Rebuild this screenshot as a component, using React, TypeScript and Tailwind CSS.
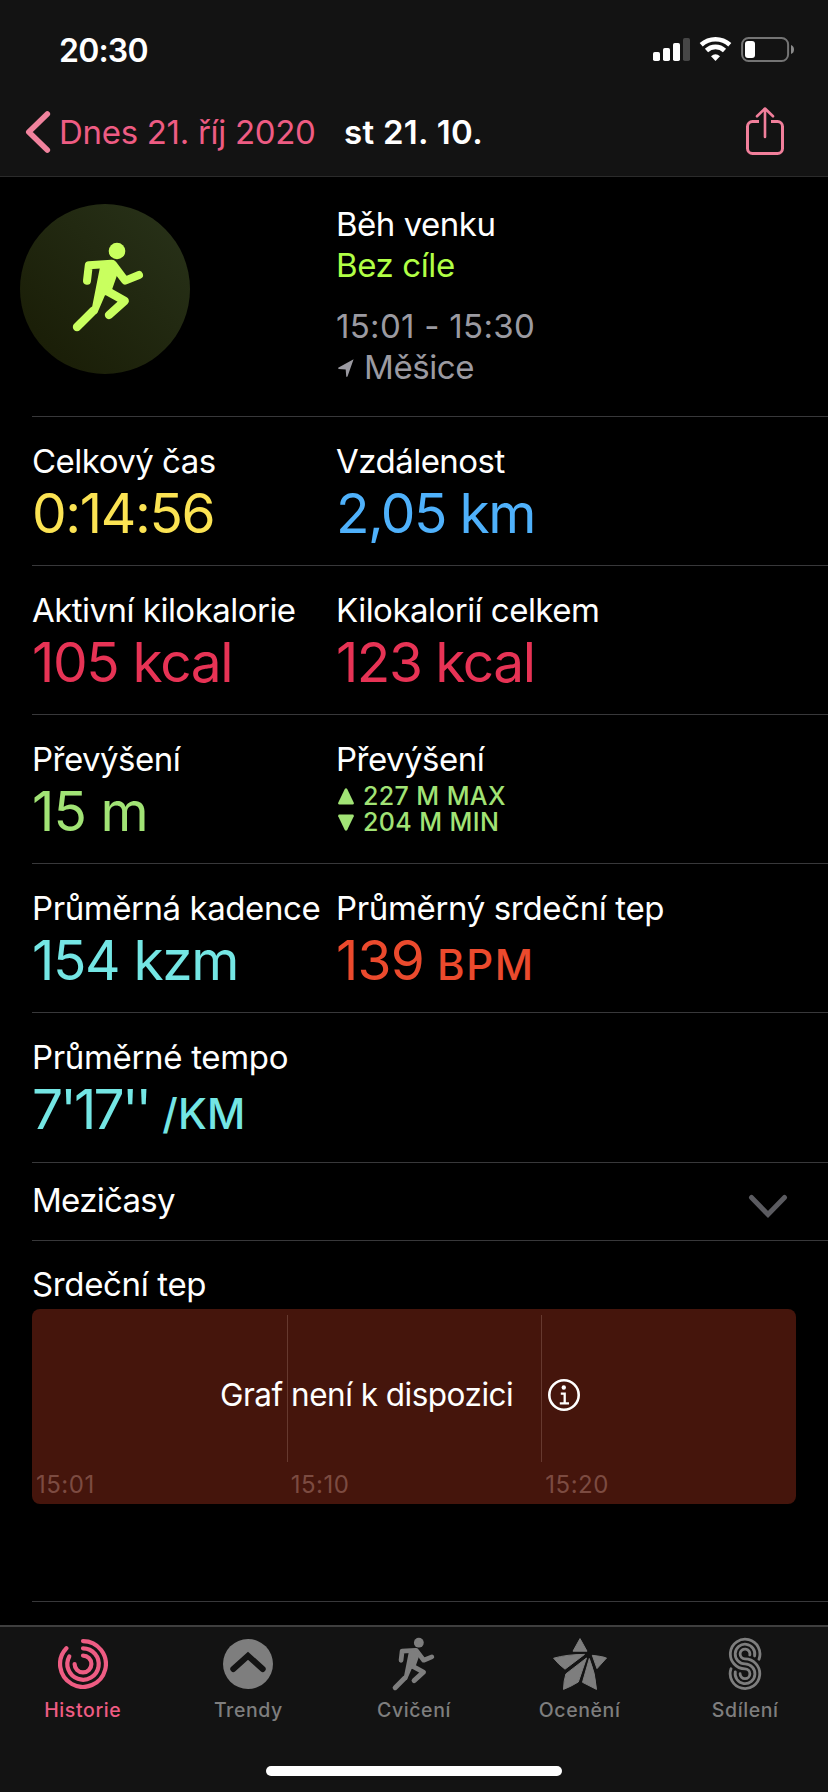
import type { ReactNode } from 'react';
import { clsx } from 'clsx';

interface Metric {
  label: string;
  labelTracking?: string;
  value?: string;
  unit?: string;
  unitTracking?: string;
  color: string;
  tracking?: string;
  range?: { max: string; min: string };
}

const metrics: Metric[][] = [
  [
    { label: 'Celkový čas', value: '0:14:56', color: 'text-[#fbe353]' },
    { label: 'Vzdálenost', value: '2,05 km', color: 'text-[#4fb1fb]', tracking: 'tracking-[-1.6px]' },
  ],
  [
    { label: 'Aktivní kilokalorie', value: '105 kcal', color: 'text-[#e73355]' },
    { label: 'Kilokalorií celkem', value: '123 kcal', color: 'text-[#e73355]', tracking: 'tracking-[-1.5px]' },
  ],
  [
    { label: 'Převýšení', value: '15 m', color: 'text-[#a1e375]', tracking: 'tracking-[-0.9px]' },
    { label: 'Převýšení', color: 'text-[#a1e375]', range: { max: '227 M MAX', min: '204 M MIN' } },
  ],
  [
    { label: 'Průměrná kadence', labelTracking: 'tracking-[-0.43px]', value: '154 kzm', color: 'text-[#74e6e4]' },
    {
      label: 'Průměrný srdeční tep',
      labelTracking: 'tracking-[-0.35px]',
      value: '139',
      unit: 'BPM',
      unitTracking: 'tracking-[1.6px]',
      color: 'text-[#eb4a2d]',
      tracking: 'tracking-[-0.8px]',
    },
  ],
  [
    {
      label: 'Průměrné tempo',
      labelTracking: 'tracking-[-0.33px]',
      value: "7'17''",
      unit: '/KM',
      unitTracking: 'tracking-[0.2px]',
      color: 'text-[#74e6e4]',
      tracking: 'tracking-[-2.8px]',
    },
  ],
];

const chartTicks = ['15:01', '15:10', '15:20'];

// Icons
function Runner({ className }: { className?: string }) {
  return (
    <svg viewBox="50 36 76 94" fill="none" stroke="currentColor" strokeLinecap="round" strokeLinejoin="round" className={className}>
      <circle cx="97" cy="47" r="8.3" fill="currentColor" stroke="none" />
      <path d="M67 76.8 68.8 61.2 91.5 59.8" strokeWidth="8" />
      <path d="M93 60.5 105.2 76.6 119 71" strokeWidth="8" />
      <path d="M82.5 62 94 61 96.5 66 89.5 86 83 90 75.5 107.5 73.8 106Z" fill="currentColor" strokeWidth="4.5" />
      <path d="M73.3 106.7 57 123" strokeWidth="8.4" />
      <path d="M87 87 104.7 96.8 89 111" strokeWidth="8.4" />
    </svg>
  );
}

function RingsIcon() {
  return (
    <svg viewBox="-25 -25 50 50" fill="none" stroke="currentColor" strokeWidth="4.2" strokeLinecap="round" className="w-[50px] h-[50px]">
      <path d="M0 -22.9A22.9 22.9 0 1 1 -16.6 -15.8" />
      <path d="M0 -15.7A15.7 15.7 0 1 1 -13.7 -7.6" />
      <path d="M0 -8.4A8.4 8.4 0 1 1 -8.4 0" />
    </svg>
  );
}

function TrendsIcon() {
  return (
    <svg viewBox="0 0 50 50" className="w-[50px] h-[50px]">
      <circle cx="25" cy="25" r="25" fill="currentColor" />
      <path d="M10.3 30 25 16.7 39.7 30" fill="none" stroke="#131313" strokeWidth="6" strokeLinecap="round" />
    </svg>
  );
}

function AwardsIcon() {
  return (
    <svg viewBox="0 0 54 54" fill="currentColor" stroke="currentColor" strokeWidth="1" strokeLinejoin="round" className="w-[54px] h-[54px]">
      <path d="M27 1.6 34 14.2H20Z" />
      <path d="M.6 21.2Q14 17.4 31.5 17.4L12 32.2Q5 27 .6 21.2Z" />
      <path d="M33.5 21 25.3 45Q18 49.500 10.5 52.4Q10.6 44 12.9 36.9Z" />
      <path d="M36.3 21.5Q42.5 36 43.5 52.4L29.5 45.3Z" />
      <path d="M39.3 18.3Q47 19 53.500 21L44 31.6Z" />
    </svg>
  );
}

function SharingIcon() {
  return (
    <svg viewBox="0 0 34 54" fill="none" stroke="currentColor" strokeWidth="2.8" strokeLinecap="round" className="w-[34px] h-[54px]">
      <path d="M31 22.2A14.8 14.8 0 1 0 17 31.8A4.9 4.9 0 1 1 12.1 36.7" />
      <path d="M26.6 19A9.8 9.8 0 1 0 17 26.8A9.9 9.9 0 1 1 7.3 34.8" />
      <path d="M21.8 18A4.9 4.9 0 1 0 17 21.9A14.8 14.8 0 1 1 3 31.8" />
    </svg>
  );
}

function ShareIcon() {
  return (
    <svg viewBox="0 0 40 50" fill="none" stroke="#f17f9b" strokeWidth="3" strokeLinecap="round" strokeLinejoin="round" className="w-10 h-[50px]">
      <path d="M14 14.5H7.5A5 5 0 0 0 2.5 19.5V41.5A5 5 0 0 0 7.5 46.5H32.5A5 5 0 0 0 37.5 41.5V19.5A5 5 0 0 0 32.5 14.5H26" strokeLinecap="butt" />
      <path d="M20 30V2M12 9.3 20 1.5 28 9.3" strokeWidth="2.6" />
    </svg>
  );
}

function StatusIcons() {
  return (
    <svg viewBox="0 0 144 28" className="w-36 h-7 mt-[6px]">
      <g fill="#fff">
        <rect x="3" y="16" width="7" height="9" rx="1.8" />
        <rect x="13" y="12" width="7" height="13" rx="1.8" />
        <rect x="23" y="7" width="7" height="18" rx="1.8" />
        <rect x="33" y="2" width="7" height="23" rx="1.8" fill="#464646" />
      </g>
      <g fill="none" stroke="#fff" strokeWidth="4.6">
        <path d="M51.2 8.7A21.5 21.5 0 0 1 79.8 8.7" />
        <path d="M56.5 14.5A13 13 0 0 1 74.5 14.5" />
      </g>
      <path d="M65.5 25 61 20.2Q65.5 16.5 70 20.2Z" fill="#fff" />
      <rect x="92.1" y="2" width="46" height="23" rx="6.5" fill="none" stroke="#747474" strokeWidth="2" />
      <rect x="95" y="5" width="10" height="17" rx="3" fill="#fff" />
      <path d="M141 9Q144 10 144 13.5T141 18Z" fill="#8a8a8a" />
    </svg>
  );
}

function InfoIcon() {
  return (
    <svg viewBox="0 0 32 32" fill="none" stroke="#fff" strokeWidth="2.6" className="w-8 h-8">
      <circle cx="16" cy="16" r="14.7" />
      <circle cx="15.8" cy="8.5" r="2.2" fill="#fff" stroke="none" />
      <path d="M12.8 14.6H16.7V24.3M11.8 24.3H21" strokeWidth="2.3" />
    </svg>
  );
}

const tabs: { label: string; icon: ReactNode }[] = [
  { label: 'Historie', icon: <RingsIcon /> },
  { label: 'Trendy', icon: <TrendsIcon /> },
  { label: 'Cvičení', icon: <Runner className="w-[45px] h-[56px]" /> },
  { label: 'Ocenění', icon: <AwardsIcon /> },
  { label: 'Sdílení', icon: <SharingIcon /> },
];

function Header() {
  return (
    <header className="h-[177px] shrink-0 bg-[#131313] border-b border-[#2b2b2b]">
      <div className="flex items-start justify-between h-[88px] pl-[59px] pr-[34px] pt-[30px]">
        <span className="pt-px text-[32px] leading-10 font-semibold tracking-[-0.8px]">20:30</span>
        <StatusIcons />
      </div>
      <div className="flex items-center h-[88px] pl-[25px] pr-[43px]">
        <svg viewBox="0 0 26 44" fill="none" stroke="#f0829d" strokeWidth="5.6" strokeLinecap="round" strokeLinejoin="round" className="w-[26px] h-11">
          <path d="M22.3 4 3.8 22 22.3 40" />
        </svg>
        <span className="w-[285px] ml-2 text-[33px] leading-10 tracking-[-0.3px] whitespace-nowrap text-[#ee5c83]">Dnes 21. říj 2020</span>
        <h1 className="text-[33px] leading-10 font-semibold tracking-[0.3px]">st 21. 10.</h1>
        <button className="ml-auto">
          <ShareIcon />
        </button>
      </div>
    </header>
  );
}

function Summary() {
  return (
    <section className="flex h-[239.7px] pl-5 pt-[27px]">
      <div className="flex items-center justify-center w-[170px] h-[170px] mr-[146px] rounded-full bg-linear-to-tr from-[#181b05] to-[#29331a] text-[#c9ff5f]">
        <Runner className="w-[76px] h-[94px] relative left-[3px] -top-[2px]" />
      </div>
      <div className="text-[33px] leading-[41px] tracking-[-0.4px]">
        <p className="tracking-[-0.5px]">Běh venku</p>
        <p className="text-[#b1ff45]">Bez cíle</p>
        <p className="mt-5 tracking-[0.3px] text-[#9b9aa1]">15:01 - 15:30</p>
        <p className="flex items-center text-[#9b9aa1]">
          <svg viewBox="0 0 16 18" fill="currentColor" className="w-4 h-[18px] ml-[2px] mr-[10px]">
            <path d="M15.6 .2 9.5 17.5Q8.6 18.6 8.2 17.2L7.7 10.6 .8 9.9Q-.5 9.2 .6 8.4Z" />
          </svg>
          Měšice
        </p>
      </div>
    </section>
  );
}

function ElevationRange({ max, min }: { max: string; min: string }) {
  return (
    <div className="pt-[2px] text-[25px] leading-[26px] font-medium tracking-[0.4px]">
      <p className="flex items-center">
        <svg viewBox="0 0 16 17" fill="currentColor" className="w-4 h-[17px] ml-[2px] mr-[9px]">
          <path d="M6.8 1Q8 -.6 9.2 1L15.8 14.8Q16 16.5 14.6 16.5H1.4Q0 16.5 .2 14.8Z" />
        </svg>
        {max}
      </p>
      <p className="flex items-center">
        <svg viewBox="0 0 16 17" fill="currentColor" className="w-4 h-[17px] ml-[2px] mr-[9px] rotate-180">
          <path d="M6.8 1Q8 -.6 9.2 1L15.8 14.8Q16 16.5 14.6 16.5H1.4Q0 16.5 .2 14.8Z" />
        </svg>
        {min}
      </p>
    </div>
  );
}

function MetricCell({ label, labelTracking, value, unit, unitTracking, color, tracking, range }: Metric) {
  return (
    <div className="whitespace-nowrap">
      <p className={clsx('text-[33px] leading-[41px]', labelTracking ?? 'tracking-[-0.52px]')}>{label}</p>
      <div className={clsx('mt-px', color)}>
        {range ? (
          <ElevationRange {...range} />
        ) : (
          <p className={clsx('text-[55px] leading-[60px]', tracking ?? 'tracking-[-1.35px]')}>
            {value}
            {unit && <span className={clsx('ml-[13px] text-[42px] font-medium', unitTracking)}>{unit}</span>}
          </p>
        )}
      </div>
    </div>
  );
}

function HeartRate() {
  return (
    <section className="h-[361px] ml-8 pt-[23px] pr-8 border-b border-[#38383a]">
      <h2 className="text-[33px] leading-[41px] tracking-[-0.35px]">Srdeční tep</h2>
      <div className="relative mt-1 h-[195px] rounded-lg bg-[#45150c]">
        <div className="grid grid-cols-3 pt-[6px]">
          {chartTicks.map((tick, index) => (
            <div key={tick}>
              <div className={clsx('h-[147px]', index > 0 && 'border-l border-[#66392f]')} />
              <p className="pt-2 pl-1 text-[24px] leading-[30px] tracking-[0.5px] text-[#7c4b41]">{tick}</p>
            </div>
          ))}
        </div>
        <div className="absolute inset-x-0 top-[66px] flex items-center pl-[188px]">
          <span className="text-[31.5px] leading-10 tracking-[-0.5px]">Graf není k dispozici</span>
          <span className="ml-auto mr-[216px]">
            <InfoIcon />
          </span>
        </div>
      </div>
    </section>
  );
}

function TabBar() {
  return (
    <nav className="flex flex-col items-center h-[167px] shrink-0 bg-[#131313] border-t-2 border-[#3f3f3f]">
      <div className="grid grid-cols-5 w-full">
        {tabs.map((tab, index) => (
          <div key={tab.label} className={clsx('flex flex-col items-center', index === 0 ? 'text-[#ee5c83]' : 'text-[#7e7e7e]')}>
            <div className="flex items-center justify-center h-[74px]">{tab.icon}</div>
            <span className="-mt-[3px] text-[19.5px] leading-6 font-medium tracking-[0.6px]">{tab.label}</span>
          </div>
        ))}
      </div>
      <div className="w-[296px] h-[10px] mt-auto mb-4 rounded-full bg-white" />
    </nav>
  );
}

// Main Component
export default function App() {
  return (
    <div className="flex flex-col w-[828px] h-[1792px] overflow-hidden bg-black text-white font-['Inter',sans-serif]">
      <Header />
      <main className="flex-1">
        <Summary />
        <div className="ml-8 -mt-px border-t border-[#38383a]" />
        {metrics.map((row, index) => (
          <section key={index} className="grid grid-cols-[304px_1fr] h-[149.2px] ml-8 pt-6 border-b border-[#38383a]">
            {row.map((metric, i) => (
              <MetricCell key={i} {...metric} />
            ))}
          </section>
        ))}
        <section className="flex justify-between h-[78.3px] ml-8 pt-[17px] pr-[39px] border-b border-[#38383a]">
          <h2 className="text-[33px] leading-[41px] tracking-[-0.7px]">Mezičasy</h2>
          <svg viewBox="0 0 42 26" fill="none" stroke="#5b5b60" strokeWidth="5" strokeLinecap="round" className="w-[42px] h-[26px] mt-[13px]">
            <path d="M4.5 4.5 21 21.5 37.5 4.5" />
          </svg>
        </section>
        <HeartRate />
      </main>
      <TabBar />
    </div>
  );
}
